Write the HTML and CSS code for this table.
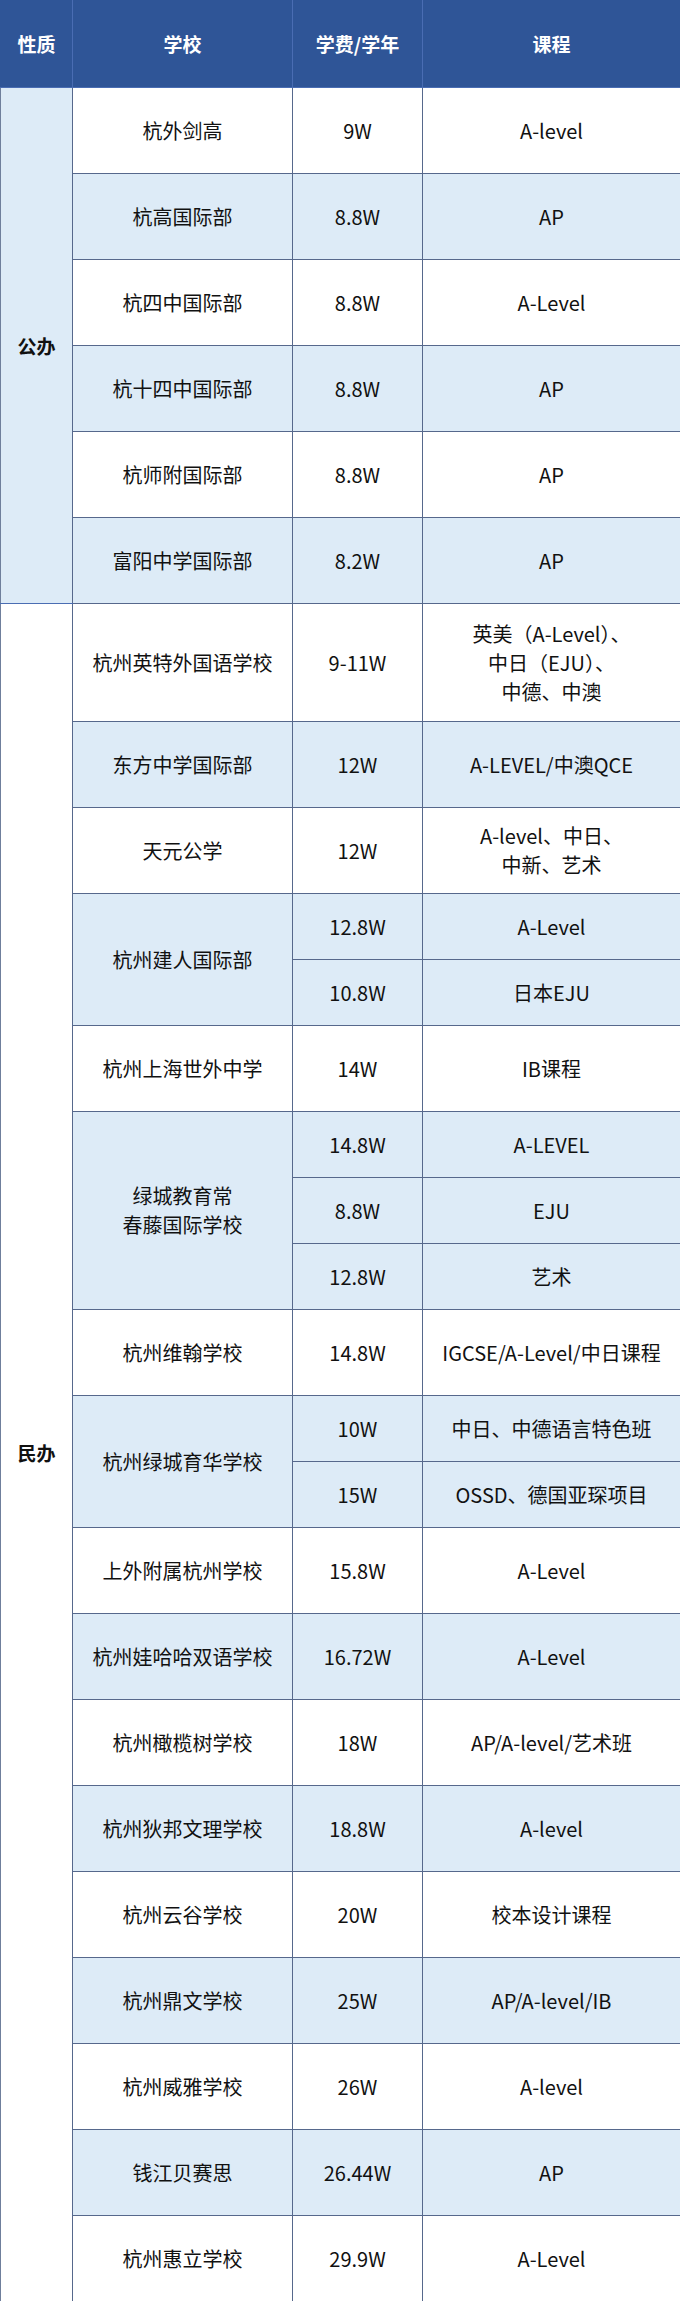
FILE: index.html
```html
<!DOCTYPE html>
<html lang="zh-CN">
<head>
<meta charset="utf-8">
<title>杭州国际学校学费</title>
<link rel="stylesheet" href="styles.css">
</head>
<body>
<table class="fees">
  <colgroup>
    <col class="c-type"><col class="c-school"><col class="c-fee"><col class="c-course">
  </colgroup>
  <thead>
    <tr class="head">
      <th>性质</th><th>学校</th><th>学费/学年</th><th>课程</th>
    </tr>
  </thead>
  <tbody>
    <tr class="r"><td class="type blue" rowspan="6">公办</td><td>杭外剑高</td><td>9W</td><td>A-level</td></tr>
    <tr class="r blue"><td>杭高国际部</td><td>8.8W</td><td>AP</td></tr>
    <tr class="r"><td>杭四中国际部</td><td>8.8W</td><td>A-Level</td></tr>
    <tr class="r blue"><td>杭十四中国际部</td><td>8.8W</td><td>AP</td></tr>
    <tr class="r"><td>杭师附国际部</td><td>8.8W</td><td>AP</td></tr>
    <tr class="r blue"><td>富阳中学国际部</td><td>8.2W</td><td>AP</td></tr>

    <tr class="t"><td class="type" rowspan="24">民办</td><td>杭州英特外国语学校</td><td>9-11W</td><td class="multi">英美（A-Level）、<br>中日（EJU）、<br>中德、中澳</td></tr>
    <tr class="r blue"><td>东方中学国际部</td><td>12W</td><td>A-LEVEL/中澳QCE</td></tr>
    <tr class="r"><td>天元公学</td><td>12W</td><td class="multi">A-level、中日、<br>中新、艺术</td></tr>
    <tr class="s blue"><td rowspan="2">杭州建人国际部</td><td>12.8W</td><td>A-Level</td></tr>
    <tr class="s blue"><td>10.8W</td><td>日本EJU</td></tr>
    <tr class="r"><td>杭州上海世外中学</td><td>14W</td><td>IB课程</td></tr>
    <tr class="s blue"><td rowspan="3" class="multi">绿城教育常<br>春藤国际学校</td><td>14.8W</td><td>A-LEVEL</td></tr>
    <tr class="s blue"><td>8.8W</td><td>EJU</td></tr>
    <tr class="s blue"><td>12.8W</td><td>艺术</td></tr>
    <tr class="r"><td>杭州维翰学校</td><td>14.8W</td><td>IGCSE/A-Level/中日课程</td></tr>
    <tr class="s blue"><td rowspan="2">杭州绿城育华学校</td><td>10W</td><td>中日、中德语言特色班</td></tr>
    <tr class="s blue"><td>15W</td><td>OSSD、德国亚琛项目</td></tr>
    <tr class="r"><td>上外附属杭州学校</td><td>15.8W</td><td>A-Level</td></tr>
    <tr class="r blue"><td>杭州娃哈哈双语学校</td><td>16.72W</td><td>A-Level</td></tr>
    <tr class="r"><td>杭州橄榄树学校</td><td>18W</td><td>AP/A-level/艺术班</td></tr>
    <tr class="r blue"><td>杭州狄邦文理学校</td><td>18.8W</td><td>A-level</td></tr>
    <tr class="r"><td>杭州云谷学校</td><td>20W</td><td>校本设计课程</td></tr>
    <tr class="r blue"><td>杭州鼎文学校</td><td>25W</td><td>AP/A-level/IB</td></tr>
    <tr class="r"><td>杭州威雅学校</td><td>26W</td><td>A-level</td></tr>
    <tr class="r blue"><td>钱江贝赛思</td><td>26.44W</td><td>AP</td></tr>
    <tr class="r"><td>杭州惠立学校</td><td>29.9W</td><td>A-Level</td></tr>
  </tbody>
</table>
</body>
</html>
```

FILE: styles.css
```css
html, body {
  margin: 0;
  padding: 0;
  background: #ffffff;
}

.fees {
  width: 680px;
  table-layout: fixed;
  border-collapse: collapse;
  font-family: "Noto Sans CJK SC", "Noto Sans", sans-serif;
  font-size: 20px;
  color: #111111;
}

.c-type { width: 72px; }
.c-school { width: 220px; }
.c-fee { width: 130px; }
.c-course { width: 258px; }

.fees th,
.fees td {
  border: 1px solid #56688c;
  padding: 0;
  text-align: center;
  vertical-align: middle;
  line-height: 29px;
}

.head {
  height: 87px;
}

.head th {
  background: #2f5597;
  color: #ffffff;
  font-weight: bold;
  font-size: 19px;
  border-color: #4a6db3;
  border-top: none;
}

.head th:first-child { border-left-color: #2f5597; }
.head th:last-child { border-right-color: #5a7fcf; }

.r { height: 86px; }
.s { height: 66px; }
.t { height: 118px; }

.blue td { background: #ddebf7; }
.type.blue { background: #ddebf7; }

.type {
  font-weight: bold;
  font-size: 19px;
  color: #111111;
  background: #ffffff;
}

.fees tbody td:first-child { border-left-color: #6f7f9c; }
.fees tbody td:last-child { border-right-color: #5a7fcf; }
.fees tbody tr:last-child td { border-bottom-color: #4a6db3; }
.fees td.type { border-bottom-color: #4a6db3; }
```
